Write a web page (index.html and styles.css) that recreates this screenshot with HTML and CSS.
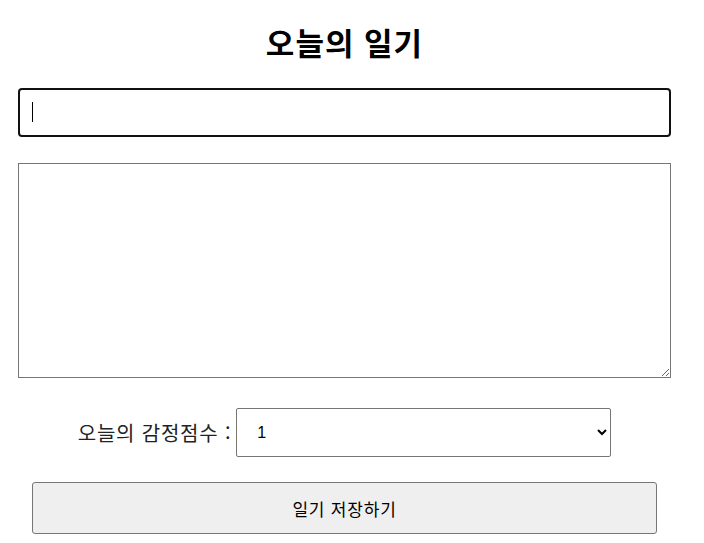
FILE: index.html
```html
<!DOCTYPE html>
<html lang="ko">
<head>
<meta charset="utf-8">
<link rel="stylesheet" href="styles.css">
</head>
<body>
<div class="editor">
  <h2 class="title">오늘의 일기</h2>
  <div class="input-wrap">
    <input class="author" type="text" value="">
    <span class="caret"></span>
  </div>
  <textarea class="content"></textarea>
  <div class="emotion-row">
    <span class="emotion-label">오늘의 감정점수 :</span>
    <select class="emotion-select">
      <option>1</option>
      <option>2</option>
      <option>3</option>
      <option>4</option>
      <option>5</option>
    </select>
  </div>
  <button class="save" type="button">일기 저장하기</button>
</div>
</body>
</html>
```
FILE: styles.css
```css
html, body {
  margin: 0;
  padding: 0;
  background: #fff;
}
body {
  font-family: "Noto Sans CJK KR", "Noto Sans", sans-serif;
  color: #000;
}
.editor {
  width: 653px;
  margin-left: 18px;
  display: flex;
  flex-direction: column;
}
.title {
  margin: 0;
  padding-top: 22px;
  height: 40px;
  line-height: 40px;
  font-size: 31px;
  letter-spacing: 1px;
  font-weight: 700;
  text-align: center;
}
.input-wrap {
  position: relative;
  margin-top: 26px;
}
.author {
  display: block;
  box-sizing: border-box;
  width: 100%;
  height: 49px;
  border: 2px solid #111;
  border-radius: 4px;
  padding: 0 12px;
  font-size: 16px;
  outline: none;
  background: #fff;
}
.caret {
  position: absolute;
  left: 14px;
  top: 14px;
  width: 1px;
  height: 20px;
  background: #000;
}
.content {
  display: block;
  box-sizing: border-box;
  margin-top: 26px;
  width: 100%;
  height: 215px;
  border: 1px solid #767676;
  padding: 2px;
  font-size: 16px;
}
.emotion-row {
  margin-top: 30px;
  display: flex;
  justify-content: center;
  align-items: center;
  gap: 5px;
  height: 49px;
}
.emotion-label {
  font-size: 20px;
  letter-spacing: 0.8px;
  color: #222;
}
.emotion-select {
  box-sizing: border-box;
  width: 375px;
  height: 49px;
  border: 1px solid #767676;
  border-radius: 2px;
  padding-left: 16px;
  font-size: 16px;
  font-family: "Liberation Sans", Arial, sans-serif;
  background: #fff;
  color: #000;
}
.save {
  margin: 25px 14px 0;
  box-sizing: border-box;
  height: 52px;
  border: 1px solid #767676;
  border-radius: 3px;
  background: #efefef;
  font-size: 17px;
  letter-spacing: 0.8px;
  font-family: "Noto Sans CJK KR", sans-serif;
  color: #000;
}
```
